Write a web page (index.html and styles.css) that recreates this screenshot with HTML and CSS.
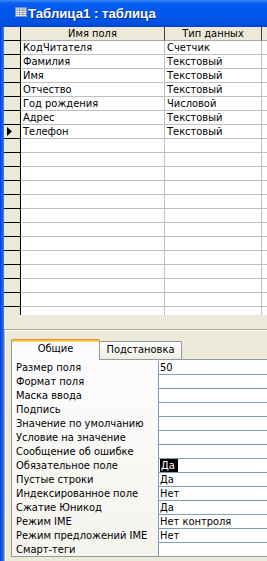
FILE: index.html
```html
<!DOCTYPE html>
<html>
<head>
<meta charset="utf-8">
<link rel="stylesheet" href="styles.css">
</head>
<body>
<div class="window">
  <div class="titlebar">
    <span class="ticonbox"><svg class="ticon" width="12" height="10" viewBox="0 0 12 10">
      <rect x="0.5" y="0.5" width="11" height="9" fill="#f2f4f8" stroke="#7b8fb8"/>
      <rect x="1" y="1" width="10" height="2" fill="#b9c7e2"/>
      <path d="M1 3.5H11M1 5.5H11M1 7.5H11M4.5 1V9M8 1V9" stroke="#9aa9c8" stroke-width="1" fill="none"/>
    </svg></span><span class="title">Таблица1 : таблица</span>
  </div>
  <div class="frame">
    <div class="frame-left"></div>
    <div class="client">
      <div class="grid">
        <div class="row head"><div class="sel"></div><div class="c1">Имя поля</div><div class="c2">Тип данных</div><div class="c3"></div></div>
        <div class="row"><div class="sel"></div><div class="c1">КодЧитателя</div><div class="c2">Счетчик</div><div class="c3"></div></div>
        <div class="row"><div class="sel"></div><div class="c1">Фамилия</div><div class="c2">Текстовый</div><div class="c3"></div></div>
        <div class="row"><div class="sel"></div><div class="c1">Имя</div><div class="c2">Текстовый</div><div class="c3"></div></div>
        <div class="row"><div class="sel"></div><div class="c1">Отчество</div><div class="c2">Текстовый</div><div class="c3"></div></div>
        <div class="row"><div class="sel"></div><div class="c1">Год рождения</div><div class="c2">Числовой</div><div class="c3"></div></div>
        <div class="row"><div class="sel"></div><div class="c1">Адрес</div><div class="c2">Текстовый</div><div class="c3"></div></div>
        <div class="row"><div class="sel"><svg class="arrow" width="5" height="9" viewBox="0 0 5 9"><polygon points="0,0 5,4.5 0,9" fill="#000"/></svg></div><div class="c1">Телефон</div><div class="c2">Текстовый</div><div class="c3"></div></div>
        <div class="row"><div class="sel"></div><div class="c1"></div><div class="c2"></div><div class="c3"></div></div>
        <div class="row"><div class="sel"></div><div class="c1"></div><div class="c2"></div><div class="c3"></div></div>
        <div class="row"><div class="sel"></div><div class="c1"></div><div class="c2"></div><div class="c3"></div></div>
        <div class="row"><div class="sel"></div><div class="c1"></div><div class="c2"></div><div class="c3"></div></div>
        <div class="row"><div class="sel"></div><div class="c1"></div><div class="c2"></div><div class="c3"></div></div>
        <div class="row"><div class="sel"></div><div class="c1"></div><div class="c2"></div><div class="c3"></div></div>
        <div class="row"><div class="sel"></div><div class="c1"></div><div class="c2"></div><div class="c3"></div></div>
        <div class="row"><div class="sel"></div><div class="c1"></div><div class="c2"></div><div class="c3"></div></div>
        <div class="row"><div class="sel"></div><div class="c1"></div><div class="c2"></div><div class="c3"></div></div>
        <div class="row"><div class="sel"></div><div class="c1"></div><div class="c2"></div><div class="c3"></div></div>
        <div class="row"><div class="sel"></div><div class="c1"></div><div class="c2"></div><div class="c3"></div></div>
        <div class="row"><div class="sel"></div><div class="c1"></div><div class="c2"></div><div class="c3"></div></div>
        <div class="row"><div class="sel"></div><div class="c1"></div><div class="c2"></div><div class="c3"></div></div>
        <div class="row"><div class="sel"></div><div class="c1"></div><div class="c2"></div><div class="c3"></div></div>
      </div>
      <div class="lower">
        <div class="pane">
          <div class="tabs">
            <div class="tab active">Общие</div>
            <div class="tab">Подстановка</div>
          </div>
          <div class="tabbody">
            <div class="props">
              <div class="prop"><div class="lbl">Размер поля</div><div class="val">50</div></div>
              <div class="prop"><div class="lbl">Формат поля</div><div class="val"></div></div>
              <div class="prop"><div class="lbl">Маска ввода</div><div class="val"></div></div>
              <div class="prop"><div class="lbl">Подпись</div><div class="val"></div></div>
              <div class="prop"><div class="lbl">Значение по умолчанию</div><div class="val"></div></div>
              <div class="prop"><div class="lbl">Условие на значение</div><div class="val"></div></div>
              <div class="prop"><div class="lbl">Сообщение об ошибке</div><div class="val"></div></div>
              <div class="prop"><div class="lbl">Обязательное поле</div><div class="val"><span class="selected">Да</span></div></div>
              <div class="prop"><div class="lbl">Пустые строки</div><div class="val">Да</div></div>
              <div class="prop"><div class="lbl">Индексированное поле</div><div class="val">Нет</div></div>
              <div class="prop"><div class="lbl">Сжатие Юникод</div><div class="val">Да</div></div>
              <div class="prop"><div class="lbl">Режим IME</div><div class="val">Нет контроля</div></div>
              <div class="prop"><div class="lbl">Режим предложений IME</div><div class="val">Нет</div></div>
              <div class="prop last"><div class="lbl">Смарт-теги</div><div class="val"></div></div>
            </div>
          </div>
        </div>
      </div>
    </div>
  </div>
</div>
</body>
</html>
```
FILE: styles.css
```css
html, body {
  margin: 0;
  padding: 0;
  overflow: hidden;
  background: #ece9d8;
}
body {
  width: 267px;
  height: 561px;
  font-family: "DejaVu Sans Condensed", "DejaVu Sans", sans-serif;
  font-size: 11px;
  color: #000;
}
.window {
  width: 420px;
  height: 561px;
  display: flex;
  flex-direction: column;
}
.titlebar {
  height: 27px;
  flex: none;
  box-sizing: border-box;
  padding: 7px 0 0 15px;
  white-space: nowrap;
  background: linear-gradient(to bottom, #3b8cf5 0px, #0a5ff2 3px, #0058ee 9px, #0056e8 18px, #004fdc 24px, #0046cc 27px);
}
.ticonbox {
  display: inline-block;
  width: 12px;
  height: 10px;
  margin-right: 1px;
  vertical-align: 0;
}
.ticon {
  display: block;
}
.title {
  display: inline-block;
  font-family: "Liberation Sans", Arial, sans-serif;
  font-weight: bold;
  font-size: 13.2px;
  line-height: 14px;
  color: #fff;
  text-shadow: 1px 1px 0 #0a2a8a;
  vertical-align: top;
}
.frame {
  flex: 1;
  display: flex;
  min-height: 0;
}
.frame-left {
  width: 4px;
  flex: none;
  background: linear-gradient(to right, #0a3dd6 0, #0a3dd6 1px, #0c5df0 1px, #0c5df0 3px, #2f7ef6 3px);
}
.client {
  flex: 1;
  display: flex;
  flex-direction: column;
  min-width: 0;
}
.grid {
  height: 288px;
  flex: none;
  overflow: hidden;
  background: #fff;
}
.row {
  display: flex;
  height: 14px;
}
.row > div {
  box-sizing: border-box;
  height: 14px;
  line-height: 13px;
  white-space: nowrap;
  overflow: hidden;
}
.sel {
  width: 17px;
  flex: none;
  background: #ece9d8;
  border-right: 1px solid #000;
  border-bottom: 1px solid #000;
  display: flex;
  align-items: center;
}
.arrow {
  display: block;
  margin-left: 3px;
}
.c1 {
  width: 144px;
  flex: none;
  padding-left: 2px;
  border-right: 1px solid #c0c0c0;
  border-bottom: 1px solid #c0c0c0;
}
.c2 {
  width: 97px;
  flex: none;
  padding-left: 2px;
  border-right: 1px solid #c0c0c0;
  border-bottom: 1px solid #c0c0c0;
}
.c3 {
  flex: 1;
  border-bottom: 1px solid #c0c0c0;
}
.head > div {
  background: #ece9d8;
  border-bottom: 1px solid #a7a6aa;
}
.head .sel {
  border-bottom: 1px solid #000;
}
.head .c1, .head .c2 {
  text-align: center;
  padding-left: 0;
  border-right: 1px solid #404040;
}
.lower {
  flex: 1;
  background: #ece9d8;
  padding-top: 14px;
}
.pane {
  height: 100%;
  box-sizing: border-box;
  border-top: 1px solid #aca899;
  border-left: 1px solid #aca899;
  box-shadow: inset 1px 1px 0 #fff;
  padding: 9px 0 0 6px;
}
.tabs {
  display: flex;
  align-items: flex-end;
  height: 20px;
}
.tab {
  box-sizing: border-box;
  height: 18px;
  line-height: 16px;
  border: 1px solid #919b9c;
  border-bottom: none;
  border-radius: 2px 2px 0 0;
  text-align: center;
  background: linear-gradient(to bottom, #fefefe, #f4f3ee 70%, #ecebe6);
}
.tab.active {
  width: 89px;
  height: 21px;
  line-height: 18px;
  margin-bottom: -1px;
  position: relative;
  z-index: 1;
  background: #fcfcfe;
  border-top: 1px solid #e68b2c;
  box-shadow: inset 0 1px 0 #ffc73c, inset 0 2px 0 #ffd56b;
}
.tab:not(.active) {
  width: 83px;
  margin-left: -1px;
}
.tabbody {
  box-sizing: border-box;
  height: 198px;
  border: 1px solid #919b9c;
  border-right: none;
  padding-top: 1px;
  background: linear-gradient(to bottom, #fcfcfe 0%, #f9f8f5 50%, #f4f3ee 100%);
}
.props {
  display: flex;
  flex-direction: column;
}
.prop {
  display: flex;
  height: 14px;
}
.prop.last {
  height: 13px;
}
.lbl {
  width: 146px;
  flex: none;
  padding-left: 4px;
  box-sizing: border-box;
  line-height: 13px;
  white-space: nowrap;
  overflow: hidden;
}
.val {
  flex: 1;
  box-sizing: border-box;
  background: #fff;
  border-left: 1px solid #7f9db9;
  border-bottom: 1px solid #7f9db9;
  padding-left: 1px;
  line-height: 13px;
  white-space: nowrap;
}
.prop.last .val {
  border-bottom: none;
}
.selected {
  background: #000;
  color: #fff;
  display: inline-block;
  padding: 0 3px 0 1px;
  line-height: 13px;
}
```
